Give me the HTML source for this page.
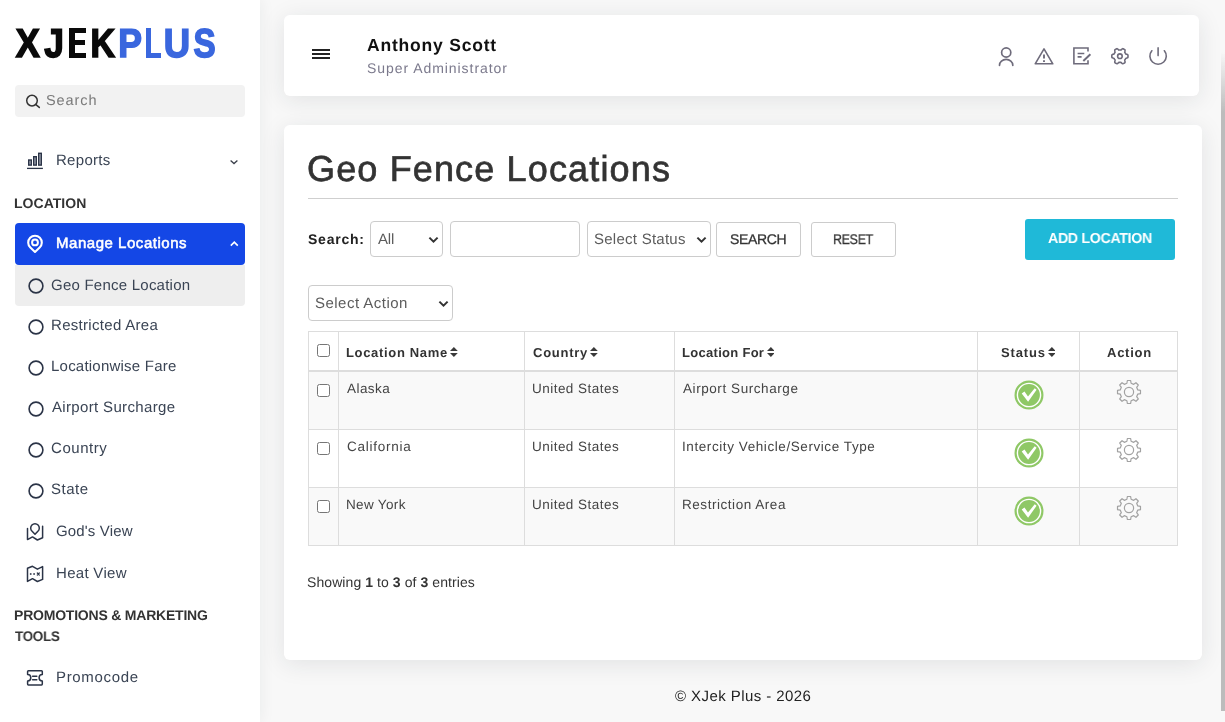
<!DOCTYPE html>
<html><head><meta charset="utf-8"><title>Geo Fence Locations</title>
<style>
*{box-sizing:border-box;margin:0;padding:0}
html,body{width:1225px;height:722px;overflow:hidden}
body{background:#f8f8f8;font-family:"Liberation Sans",sans-serif;position:relative;color:#333}
.abs{position:absolute}
.t{position:absolute;white-space:nowrap;line-height:20px;height:20px;will-change:transform;text-rendering:geometricPrecision}
.circ{position:absolute;left:28.2px;width:15.6px;height:15.6px;border:1.6px solid #2f3a4c;border-radius:50%}
.card{position:absolute;background:#fff;border-radius:6px;box-shadow:0 4px 24px 0 rgba(34,41,47,.1)}
.ctl{position:absolute;border:1px solid #ccc;background:#fff}
.cb{position:absolute;width:13px;height:13px;border:1px solid #767676;border-radius:2.5px;background:#fff}
</style></head><body>
<div class="abs" style="left:0px;top:0px;width:260px;height:722px;background:#fff;box-shadow:0 0 15px 0 rgba(34,41,47,.07)"></div>
<div class="abs" style="left:15px;top:85px;width:230px;height:32px;background:#f2f2f2;border-radius:4px"></div>
<div class="abs" style="left:15px;top:223px;width:230px;height:42px;background:#1447e6;border-radius:4px"></div>
<div class="abs" style="left:15px;top:265px;width:230px;height:41px;background:#eeeeee;border-radius:0 0 4px 4px"></div>
<svg class="abs" style="left:27px;top:277.0px" width="18" height="18" viewBox="0 0 18 18"><circle cx="9" cy="9" r="6.9" fill="none" stroke="#2b3447" stroke-width="1.6"/></svg>
<svg class="abs" style="left:27px;top:318.0px" width="18" height="18" viewBox="0 0 18 18"><circle cx="9" cy="9" r="6.9" fill="none" stroke="#2b3447" stroke-width="1.6"/></svg>
<svg class="abs" style="left:27px;top:359.0px" width="18" height="18" viewBox="0 0 18 18"><circle cx="9" cy="9" r="6.9" fill="none" stroke="#2b3447" stroke-width="1.6"/></svg>
<svg class="abs" style="left:27px;top:400.0px" width="18" height="18" viewBox="0 0 18 18"><circle cx="9" cy="9" r="6.9" fill="none" stroke="#2b3447" stroke-width="1.6"/></svg>
<svg class="abs" style="left:27px;top:441.0px" width="18" height="18" viewBox="0 0 18 18"><circle cx="9" cy="9" r="6.9" fill="none" stroke="#2b3447" stroke-width="1.6"/></svg>
<svg class="abs" style="left:27px;top:482.0px" width="18" height="18" viewBox="0 0 18 18"><circle cx="9" cy="9" r="6.9" fill="none" stroke="#2b3447" stroke-width="1.6"/></svg>
<svg class="abs" style="left:0;top:0;will-change:transform" text-rendering="geometricPrecision" width="260" height="70" viewBox="0 0 260 70" font-family="Liberation Sans" font-weight="bold" font-size="40" stroke-width="1.6" stroke-linejoin="miter"><text vector-effect="non-scaling-stroke" transform="translate(15.66 56.80) scale(0.9005 1.0073)" fill="#0a0a0a" stroke="#0a0a0a">X</text><text vector-effect="non-scaling-stroke" transform="translate(44.15 56.82) scale(0.8848 1.0081)" fill="#0a0a0a" stroke="#0a0a0a">J</text><text vector-effect="non-scaling-stroke" transform="translate(90.47 56.80) scale(0.8502 1.0073)" fill="#0a0a0a" stroke="#0a0a0a">K</text><text vector-effect="non-scaling-stroke" transform="translate(118.17 56.80) scale(0.8884 1.0073)" fill="#3a67de" stroke="#3a67de">P</text><text vector-effect="non-scaling-stroke" transform="translate(163.83 56.82) scale(0.9119 1.0081)" fill="#3a67de" stroke="#3a67de">U</text><text vector-effect="non-scaling-stroke" transform="translate(193.47 56.82) scale(0.8292 1.0088)" fill="#3a67de" stroke="#3a67de">S</text></svg>
<div class="abs" style="left:69.2px;top:28.3px;width:5.9px;height:29.3px;background:#0a0a0a"></div>
<div class="abs" style="left:69.2px;top:28.3px;width:17.0px;height:4.7px;background:#0a0a0a"></div>
<div class="abs" style="left:69.2px;top:40.2px;width:15.7px;height:4.7px;background:#0a0a0a"></div>
<div class="abs" style="left:69.2px;top:52.9px;width:17.0px;height:4.7px;background:#0a0a0a"></div>
<div class="abs" style="left:145.5px;top:28.3px;width:5.9px;height:29.3px;background:#3a67de"></div>
<div class="abs" style="left:145.5px;top:52.8px;width:15.4px;height:4.8px;background:#3a67de"></div>
<div class="card" style="left:284px;top:15px;width:915px;height:81px"></div>
<div class="card" style="left:284px;top:125px;width:918px;height:535px"></div>
<div class="abs" style="left:312px;top:49px;width:18px;height:2px;background:#222"></div>
<div class="abs" style="left:312px;top:53px;width:18px;height:2px;background:#222"></div>
<div class="abs" style="left:312px;top:57px;width:18px;height:2px;background:#222"></div>
<div class="abs" style="left:308px;top:198px;width:870px;height:1px;background:#cfcfcf"></div>
<div class="ctl" style="left:370px;top:221px;width:73px;height:36px;border-radius:4px"><svg class="abs" style="right:3px;top:13.5px" width="11" height="8" viewBox="0 0 11 8"><path d="M1.4 1.6 L5.5 5.6 L9.6 1.6" fill="none" stroke="#333" stroke-width="2"/></svg></div>
<div class="ctl" style="left:450px;top:221px;width:130px;height:36px;border-radius:4px"></div>
<div class="ctl" style="left:587px;top:221px;width:124px;height:36px;border-radius:4px"><svg class="abs" style="right:3px;top:13.5px" width="11" height="8" viewBox="0 0 11 8"><path d="M1.4 1.6 L5.5 5.6 L9.6 1.6" fill="none" stroke="#333" stroke-width="2"/></svg></div>
<div class="ctl" style="left:716px;top:222px;width:85px;height:35px;border-radius:3px"></div>
<div class="ctl" style="left:811px;top:222px;width:85px;height:35px;border-radius:3px"></div>
<div class="abs" style="left:1025px;top:219px;width:150px;height:41px;background:#1fb9d8;border-radius:3px"></div>
<div class="ctl" style="left:308px;top:285px;width:145px;height:36px;border-radius:4px"><svg class="abs" style="right:3px;top:13.5px" width="11" height="8" viewBox="0 0 11 8"><path d="M1.4 1.6 L5.5 5.6 L9.6 1.6" fill="none" stroke="#333" stroke-width="2"/></svg></div>
<div class="abs" style="left:308px;top:372px;width:870px;height:57px;background:#f9f9f9"></div>
<div class="abs" style="left:308px;top:488px;width:870px;height:57px;background:#f9f9f9"></div>
<div class="abs" style="left:308px;top:331px;width:1px;height:215px;background:#ddd"></div>
<div class="abs" style="left:338px;top:331px;width:1px;height:215px;background:#ddd"></div>
<div class="abs" style="left:524px;top:331px;width:1px;height:215px;background:#ddd"></div>
<div class="abs" style="left:674px;top:331px;width:1px;height:215px;background:#ddd"></div>
<div class="abs" style="left:977px;top:331px;width:1px;height:215px;background:#ddd"></div>
<div class="abs" style="left:1079px;top:331px;width:1px;height:215px;background:#ddd"></div>
<div class="abs" style="left:1177px;top:331px;width:1px;height:215px;background:#ddd"></div>
<div class="abs" style="left:308px;top:331px;width:870px;height:1px;background:#ddd"></div>
<div class="abs" style="left:308px;top:370px;width:870px;height:2px;background:#ddd"></div>
<div class="abs" style="left:308px;top:429px;width:870px;height:1px;background:#ddd"></div>
<div class="abs" style="left:308px;top:487px;width:870px;height:1px;background:#ddd"></div>
<div class="abs" style="left:308px;top:545px;width:870px;height:1px;background:#ddd"></div>
<div class="cb" style="left:317px;top:344px"></div>
<div class="cb" style="left:317px;top:384px"></div>
<div class="cb" style="left:317px;top:442px"></div>
<div class="cb" style="left:317px;top:500px"></div>
<svg class="abs" style="left:450.2px;top:347.1px" width="7.8" height="10" viewBox="0 0 7.8 10"><path d="M0 4.05 L3.9 0 L7.8 4.05Z M0 5.95 L3.9 10 L7.8 5.95Z" fill="#3a3a3a"/></svg>
<svg class="abs" style="left:590.0px;top:347.1px" width="7.8" height="10" viewBox="0 0 7.8 10"><path d="M0 4.05 L3.9 0 L7.8 4.05Z M0 5.95 L3.9 10 L7.8 5.95Z" fill="#3a3a3a"/></svg>
<svg class="abs" style="left:766.6px;top:347.1px" width="7.8" height="10" viewBox="0 0 7.8 10"><path d="M0 4.05 L3.9 0 L7.8 4.05Z M0 5.95 L3.9 10 L7.8 5.95Z" fill="#3a3a3a"/></svg>
<svg class="abs" style="left:1047.7px;top:347.1px" width="7.8" height="10" viewBox="0 0 7.8 10"><path d="M0 4.05 L3.9 0 L7.8 4.05Z M0 5.95 L3.9 10 L7.8 5.95Z" fill="#3a3a3a"/></svg>
<svg class="abs" style="left:1014px;top:380px" width="30" height="30" viewBox="0 0 30 30"><circle cx="15" cy="15" r="14.5" fill="#8fc866"/><circle cx="15" cy="15" r="11.6" fill="none" stroke="#fff" stroke-width="1.4"/><path d="M7.7 13.4 L10.5 11.5 L14.0 16.6 L20.7 8.3 L22.6 9.7 L14.1 21.8 Z" fill="#fff"/></svg>
<svg class="abs" style="left:1116px;top:379px" width="26" height="26" viewBox="0 0 26 26"><path d="M10.90 4.25 L11.37 1.52 L14.63 1.52 L15.10 4.25 L17.70 5.33 L19.96 3.72 L22.28 6.04 L20.67 8.30 L21.75 10.90 L24.48 11.37 L24.48 14.63 L21.75 15.10 L20.67 17.70 L22.28 19.96 L19.96 22.28 L17.70 20.67 L15.10 21.75 L14.63 24.48 L11.37 24.48 L10.90 21.75 L8.30 20.67 L6.04 22.28 L3.72 19.96 L5.33 17.70 L4.25 15.10 L1.52 14.63 L1.52 11.37 L4.25 10.90 L5.33 8.30 L3.72 6.04 L6.04 3.72 L8.30 5.33Z" fill="none" stroke="#a2a2a2" stroke-width="1.2" stroke-linejoin="round"/><circle cx="13" cy="13" r="4.6" fill="none" stroke="#a2a2a2" stroke-width="1.2"/></svg>
<svg class="abs" style="left:1014px;top:438px" width="30" height="30" viewBox="0 0 30 30"><circle cx="15" cy="15" r="14.5" fill="#8fc866"/><circle cx="15" cy="15" r="11.6" fill="none" stroke="#fff" stroke-width="1.4"/><path d="M7.7 13.4 L10.5 11.5 L14.0 16.6 L20.7 8.3 L22.6 9.7 L14.1 21.8 Z" fill="#fff"/></svg>
<svg class="abs" style="left:1116px;top:437px" width="26" height="26" viewBox="0 0 26 26"><path d="M10.90 4.25 L11.37 1.52 L14.63 1.52 L15.10 4.25 L17.70 5.33 L19.96 3.72 L22.28 6.04 L20.67 8.30 L21.75 10.90 L24.48 11.37 L24.48 14.63 L21.75 15.10 L20.67 17.70 L22.28 19.96 L19.96 22.28 L17.70 20.67 L15.10 21.75 L14.63 24.48 L11.37 24.48 L10.90 21.75 L8.30 20.67 L6.04 22.28 L3.72 19.96 L5.33 17.70 L4.25 15.10 L1.52 14.63 L1.52 11.37 L4.25 10.90 L5.33 8.30 L3.72 6.04 L6.04 3.72 L8.30 5.33Z" fill="none" stroke="#a2a2a2" stroke-width="1.2" stroke-linejoin="round"/><circle cx="13" cy="13" r="4.6" fill="none" stroke="#a2a2a2" stroke-width="1.2"/></svg>
<svg class="abs" style="left:1014px;top:496px" width="30" height="30" viewBox="0 0 30 30"><circle cx="15" cy="15" r="14.5" fill="#8fc866"/><circle cx="15" cy="15" r="11.6" fill="none" stroke="#fff" stroke-width="1.4"/><path d="M7.7 13.4 L10.5 11.5 L14.0 16.6 L20.7 8.3 L22.6 9.7 L14.1 21.8 Z" fill="#fff"/></svg>
<svg class="abs" style="left:1116px;top:495px" width="26" height="26" viewBox="0 0 26 26"><path d="M10.90 4.25 L11.37 1.52 L14.63 1.52 L15.10 4.25 L17.70 5.33 L19.96 3.72 L22.28 6.04 L20.67 8.30 L21.75 10.90 L24.48 11.37 L24.48 14.63 L21.75 15.10 L20.67 17.70 L22.28 19.96 L19.96 22.28 L17.70 20.67 L15.10 21.75 L14.63 24.48 L11.37 24.48 L10.90 21.75 L8.30 20.67 L6.04 22.28 L3.72 19.96 L5.33 17.70 L4.25 15.10 L1.52 14.63 L1.52 11.37 L4.25 10.90 L5.33 8.30 L3.72 6.04 L6.04 3.72 L8.30 5.33Z" fill="none" stroke="#a2a2a2" stroke-width="1.2" stroke-linejoin="round"/><circle cx="13" cy="13" r="4.6" fill="none" stroke="#a2a2a2" stroke-width="1.2"/></svg>
<div class="abs" style="left:1221px;top:52px;width:4px;height:659px;background:linear-gradient(to bottom,rgba(188,188,188,0) 0,rgba(188,188,188,1) 60px,rgba(188,188,188,1) 100%)"></div>
<svg class="abs" style="left:0;top:0" width="1225" height="722" viewBox="0 0 1225 722" fill="none" stroke-linecap="round" stroke-linejoin="round"><g stroke="#333" stroke-width="1.5"><circle cx="32" cy="100.6" r="5.3"/><path d="M35.9 104.6 L39.3 107.4"/></g><g stroke="#2b3447" stroke-width="1.4" stroke-linejoin="miter" stroke-linecap="butt" fill="#aab0bb"><rect x="28.7" y="160" width="2.6" height="5.1"/><rect x="33.7" y="156.7" width="2.6" height="8.4"/><rect x="38.7" y="153.3" width="2.6" height="11.8"/><path d="M27 168.4 H42.9" stroke-width="1.3"/></g><path d="M230.6 160.6 L234 163.6 L237.4 160.6" stroke="#3a3f4a" stroke-width="1.3" stroke-linecap="butt" stroke-linejoin="miter"/><path d="M230.8 245.6 L234.3 242.2 L237.8 245.6" stroke="#fff" stroke-width="1.6" stroke-linecap="butt" stroke-linejoin="miter"/><g stroke="#fff" stroke-width="2.1"><path d="M35 251.9 L30.36 247.47 A6.8 6.8 0 1 1 39.64 247.47 Z"/><circle cx="35" cy="242.4" r="2.9" stroke-width="2"/></g><g stroke="#2b3447" stroke-width="1.5"><path d="M27.5 528.4 V539.6 L32.5 536.9 L37.4 540 L42.6 537.8 V526.2"/><path d="M35 534.3 L32.1 531.2 A4.3 4.3 0 1 1 37.9 531.2 Z"/></g><g stroke="#2b3447" stroke-width="1.5"><path d="M27.5 568.3 L32.5 566.3 L37.4 569.2 L42.6 566.6 V579.4 L37.4 581.5 L32.5 578.7 L27.5 581.4 Z"/><path d="M37.3 573 L39.3 575 M39.3 573 L37.3 575" stroke-width="1.2"/></g><rect x="29.9" y="573.2" width="1.6" height="1.6" fill="#2b3447"/><rect x="33.3" y="573.2" width="1.6" height="1.6" fill="#2b3447"/><g stroke="#2b3447" stroke-width="1.5"><path d="M28.4 670.7 H41.5 Q42.3 670.7 42.3 671.5 V674.6 A3.2 3.2 0 0 0 42.3 681 V684.1 Q42.3 684.9 41.5 684.9 H28.4 Q27.6 684.9 27.6 684.1 V681 A3.2 3.2 0 0 0 27.6 674.6 V671.5 Q27.6 670.7 28.4 670.7 Z"/><path d="M32.6 676.3 H36.8 M32.6 679.7 H36.8"/></g><g stroke="#6e6b7b" stroke-width="1.7"><circle cx="1006.2" cy="52.5" r="4.6"/><path d="M999.5 65.3 A6.65 5.9 0 0 1 1012.8 65.3"/></g><g stroke="#6e6b7b" stroke-width="1.6"><path d="M1044 48.9 L1052.8 63.8 H1035.2 Z" stroke-linejoin="round"/><path d="M1044 54.6 V58.4" stroke-linecap="butt" stroke-width="1.9"/><path d="M1044 60.3 V61.9" stroke-linecap="butt" stroke-width="1.9"/></g><g stroke="#6e6b7b" stroke-width="1.6" stroke-linecap="butt" stroke-linejoin="miter"><path d="M1088 51.4 V48 H1073.9 V63.8 H1088 V60.2"/><path d="M1077.6 53.5 H1084.3 M1077.6 56.9 H1081.6"/><path d="M1083.3 60.9 L1090.4 54.3" stroke-width="2"/></g><g stroke="#6e6b7b" stroke-width="1.6"><path d="M1128.00 56.20 L1127.99 56.62 L1127.96 57.05 L1127.90 57.47 L1127.41 57.80 L1126.81 58.05 L1126.20 58.25 L1125.69 58.42 L1125.56 58.72 L1125.42 59.01 L1125.27 59.30 L1125.10 59.58 L1124.92 59.84 L1124.72 60.10 L1124.82 60.63 L1124.96 61.26 L1125.04 61.91 L1125.00 62.49 L1124.66 62.75 L1124.31 62.99 L1123.95 63.21 L1123.58 63.42 L1123.19 63.60 L1122.80 63.76 L1122.27 63.50 L1121.75 63.11 L1121.28 62.68 L1120.87 62.32 L1120.55 62.37 L1120.22 62.39 L1119.90 62.40 L1119.58 62.39 L1119.25 62.37 L1118.93 62.32 L1118.52 62.68 L1118.05 63.11 L1117.53 63.50 L1117.00 63.76 L1116.61 63.60 L1116.22 63.42 L1115.85 63.21 L1115.49 62.99 L1115.14 62.75 L1114.80 62.49 L1114.76 61.91 L1114.84 61.26 L1114.98 60.63 L1115.08 60.10 L1114.88 59.84 L1114.70 59.58 L1114.53 59.30 L1114.38 59.01 L1114.24 58.72 L1114.11 58.42 L1113.60 58.25 L1112.99 58.05 L1112.39 57.80 L1111.90 57.47 L1111.84 57.05 L1111.81 56.62 L1111.80 56.20 L1111.81 55.78 L1111.84 55.35 L1111.90 54.93 L1112.39 54.60 L1112.99 54.35 L1113.60 54.15 L1114.11 53.98 L1114.24 53.68 L1114.38 53.39 L1114.53 53.10 L1114.70 52.82 L1114.88 52.56 L1115.08 52.30 L1114.98 51.77 L1114.84 51.14 L1114.76 50.49 L1114.80 49.91 L1115.14 49.65 L1115.49 49.41 L1115.85 49.19 L1116.22 48.98 L1116.61 48.80 L1117.00 48.64 L1117.53 48.90 L1118.05 49.29 L1118.52 49.72 L1118.93 50.08 L1119.25 50.03 L1119.58 50.01 L1119.90 50.00 L1120.22 50.01 L1120.55 50.03 L1120.87 50.08 L1121.28 49.72 L1121.75 49.29 L1122.27 48.90 L1122.80 48.64 L1123.19 48.80 L1123.58 48.98 L1123.95 49.19 L1124.31 49.41 L1124.66 49.65 L1125.00 49.91 L1125.04 50.49 L1124.96 51.14 L1124.82 51.77 L1124.72 52.30 L1124.92 52.56 L1125.10 52.82 L1125.27 53.10 L1125.42 53.39 L1125.56 53.68 L1125.69 53.98 L1126.20 54.15 L1126.81 54.35 L1127.41 54.60 L1127.90 54.93 L1127.96 55.35 L1127.99 55.78Z"/><circle cx="1119.9" cy="56.2" r="2.3"/></g><g stroke="#6e6b7b" stroke-width="1.6"><path d="M1151.82 50.73 A8.2 8.2 0 1 0 1164.38 50.73"/><path d="M1158.1 47.9 V55.6"/></g></svg>
<div class="t" id="s_search" style="left:46.3px;top:91.0px;font-size:14.5px;font-weight:normal;color:#7a7a7a;letter-spacing:0.918px;">Search</div>
<div class="t" id="s_rep" style="left:55.5px;top:151.0px;font-size:15px;font-weight:normal;color:#3a4454;letter-spacing:0.289px;">Reports</div>
<div class="t" id="s_loc" style="left:13.5px;top:192.5px;font-size:14px;font-weight:bold;color:#333;letter-spacing:0.038px;">LOCATION</div>
<div class="t" id="s_ml" style="left:56.0px;top:234.0px;font-size:15px;font-weight:normal;color:#fff;letter-spacing:0.533px;-webkit-text-stroke:0.55px #fff;">Manage Locations</div>
<div class="t" id="s_gf" style="left:51.2px;top:275.5px;font-size:15px;font-weight:normal;color:#3a4454;letter-spacing:0.235px;">Geo Fence Location</div>
<div class="t" id="s_ra" style="left:51.4px;top:316.0px;font-size:15px;font-weight:normal;color:#3a4454;letter-spacing:0.304px;">Restricted Area</div>
<div class="t" id="s_lf" style="left:51.4px;top:357.3px;font-size:15px;font-weight:normal;color:#3a4454;letter-spacing:0.224px;">Locationwise Fare</div>
<div class="t" id="s_as" style="left:52.4px;top:398.3px;font-size:15px;font-weight:normal;color:#3a4454;letter-spacing:0.343px;">Airport Surcharge</div>
<div class="t" id="s_co" style="left:51.4px;top:439.3px;font-size:15px;font-weight:normal;color:#3a4454;letter-spacing:0.544px;">Country</div>
<div class="t" id="s_st" style="left:51.4px;top:480.3px;font-size:15px;font-weight:normal;color:#3a4454;letter-spacing:0.518px;">State</div>
<div class="t" id="s_gv" style="left:56.3px;top:522.0px;font-size:15px;font-weight:normal;color:#3a4454;letter-spacing:0.155px;">God's View</div>
<div class="t" id="s_hv" style="left:56.3px;top:564.0px;font-size:15px;font-weight:normal;color:#3a4454;letter-spacing:0.301px;">Heat View</div>
<div class="t" id="s_pm" style="left:14.3px;top:605.0px;font-size:14px;font-weight:bold;color:#333;letter-spacing:-0.211px;">PROMOTIONS &amp; MARKETING</div>
<div class="t" id="s_tl" style="left:15.3px;top:626.0px;font-size:14px;font-weight:bold;color:#333;letter-spacing:-0.300px;transform:scaleX(0.9589);transform-origin:0 50%;">TOOLS</div>
<div class="t" id="s_pc" style="left:56.3px;top:668.0px;font-size:15px;font-weight:normal;color:#3a4454;letter-spacing:0.662px;">Promocode</div>
<div class="t" id="h_name" style="left:366.6px;top:35.0px;font-size:17.5px;font-weight:bold;color:#111;letter-spacing:0.802px;">Anthony Scott</div>
<div class="t" id="h_role" style="left:366.6px;top:58.2px;font-size:14px;font-weight:normal;color:#7b798c;letter-spacing:0.945px;">Super Administrator</div>
<div class="t" id="m_title" style="left:306.7px;top:159.0px;font-size:36px;font-weight:normal;color:#333;letter-spacing:1.149px;-webkit-text-stroke:0.7px #333;">Geo Fence Locations</div>
<div class="t" id="m_slab" style="left:307.6px;top:229.0px;font-size:14px;font-weight:bold;color:#222;letter-spacing:0.759px;">Search:</div>
<div class="t" id="m_all" style="left:378.4px;top:230.0px;font-size:15px;font-weight:normal;color:#5c5c5c;letter-spacing:-0.156px;">All</div>
<div class="t" id="m_ss" style="left:593.5px;top:230.0px;font-size:15px;font-weight:normal;color:#5c5c5c;letter-spacing:0.253px;">Select Status</div>
<div class="t" id="m_sb" style="left:729.7px;top:229.3px;font-size:14px;font-weight:normal;color:#333;letter-spacing:-0.356px;-webkit-text-stroke:0.3px #333;">SEARCH</div>
<div class="t" id="m_rb" style="left:832.9px;top:229.3px;font-size:14px;font-weight:normal;color:#333;letter-spacing:-0.300px;transform:scaleX(0.8828);transform-origin:0 50%;-webkit-text-stroke:0.3px #333;">RESET</div>
<div class="t" id="m_add" style="left:1047.8px;top:229.3px;font-size:14.5px;font-weight:bold;color:#fff;letter-spacing:-0.300px;transform:scaleX(0.9763);transform-origin:0 50%;">ADD LOCATION</div>
<div class="t" id="m_sa" style="left:315.0px;top:294.0px;font-size:15px;font-weight:normal;color:#5c5c5c;letter-spacing:0.472px;">Select Action</div>
<div class="t" id="th1" style="left:346.3px;top:342.6px;font-size:13px;font-weight:bold;color:#333;letter-spacing:0.667px;">Location Name</div>
<div class="t" id="th2" style="left:533.2px;top:342.6px;font-size:13px;font-weight:bold;color:#333;letter-spacing:0.749px;">Country</div>
<div class="t" id="th3" style="left:682.0px;top:342.6px;font-size:13px;font-weight:bold;color:#333;letter-spacing:0.291px;">Location For</div>
<div class="t" id="th4" style="left:1001.2px;top:342.6px;font-size:13px;font-weight:bold;color:#333;letter-spacing:0.837px;">Status</div>
<div class="t" id="th5" style="left:1107.4px;top:342.6px;font-size:13px;font-weight:bold;color:#333;letter-spacing:0.750px;">Action</div>
<div class="t" id="r0a" style="left:347.3px;top:378.6px;font-size:13.5px;font-weight:normal;color:#444;letter-spacing:0.440px;">Alaska</div>
<div class="t" id="r0b" style="left:532.2px;top:378.6px;font-size:13.5px;font-weight:normal;color:#444;letter-spacing:0.469px;">United States</div>
<div class="t" id="r0c" style="left:683.0px;top:378.6px;font-size:13.5px;font-weight:normal;color:#444;letter-spacing:0.568px;">Airport Surcharge</div>
<div class="t" id="r1a" style="left:347.3px;top:436.6px;font-size:13.5px;font-weight:normal;color:#444;letter-spacing:0.756px;">California</div>
<div class="t" id="r1b" style="left:532.2px;top:436.6px;font-size:13.5px;font-weight:normal;color:#444;letter-spacing:0.469px;">United States</div>
<div class="t" id="r1c" style="left:682.0px;top:436.6px;font-size:13.5px;font-weight:normal;color:#444;letter-spacing:0.579px;">Intercity Vehicle/Service Type</div>
<div class="t" id="r2a" style="left:346.3px;top:494.6px;font-size:13.5px;font-weight:normal;color:#444;letter-spacing:0.335px;">New York</div>
<div class="t" id="r2b" style="left:532.2px;top:494.6px;font-size:13.5px;font-weight:normal;color:#444;letter-spacing:0.469px;">United States</div>
<div class="t" id="r2c" style="left:682.0px;top:494.6px;font-size:13.5px;font-weight:normal;color:#444;letter-spacing:0.542px;">Restriction Area</div>
<div class="t" id="m_show" style="left:307.0px;top:571.5px;font-size:14px;font-weight:normal;color:#333;letter-spacing:0.077px;">Showing <b>1</b> to <b>3</b> of <b>3</b> entries</div>
<div class="t" id="foot" style="left:675.0px;top:686.5px;font-size:15px;font-weight:normal;color:#222;letter-spacing:0.429px;">&copy; XJek Plus - 2026</div>
</body></html>
